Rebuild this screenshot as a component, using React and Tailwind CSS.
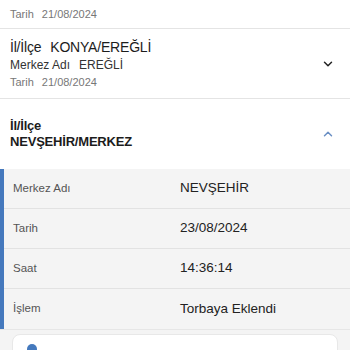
import { ChevronDown, ChevronUp } from 'lucide-react'

const rows = [
  { label: 'Merkez Adı', value: 'NEVŞEHİR' },
  { label: 'Tarih', value: '23/08/2024' },
  { label: 'Saat', value: '14:36:14' },
  { label: 'İşlem', value: 'Torbaya Eklendi' },
]

export default function App() {
  return (
    <div className="w-[350px] h-[350px] overflow-hidden bg-white text-[#1c1c1c]" style={{ fontFamily: '"Liberation Sans", Arial, sans-serif' }}>
      {/* previous item tail */}
      <div className="h-[29px] pl-[10px] pr-3 flex items-center text-[11px] text-[#777] border-b border-[#e4e4e4]">
        <span>Tarih</span>
        <span className="ml-[8px]">21/08/2024</span>
      </div>

      {/* collapsed item */}
      <div className="h-[70px] pl-[10px] pr-3 flex items-center border-b border-[#e4e4e4]">
        <div className="flex-1 flex flex-col">
          <div className="text-[14px] leading-[18px] mt-[1px] tracking-[-0.2px]">
            <span>İl/İlçe</span>
            <span className="ml-[9px]">KONYA/EREĞLİ</span>
          </div>
          <div className="text-[12px] leading-[17px] mt-[1px] text-[#333]">
            <span>Merkez Adı</span>
            <span className="ml-[9px]">EREĞLİ</span>
          </div>
          <div className="text-[11px] leading-[17px] text-[#777]">
            <span>Tarih</span>
            <span className="ml-[8px]">21/08/2024</span>
          </div>
        </div>
        <ChevronDown size={14} strokeWidth={2.5} className="text-[#222] mr-[3px]" />
      </div>

      {/* expanded item */}
      <div className="h-[70px] pl-[10px] pr-3 flex items-center">
        <div className="flex-1 font-bold text-[13px] leading-[16px] tracking-[-0.2px]">
          <div>İl/İlçe</div>
          <div>NEVŞEHİR/MERKEZ</div>
        </div>
        <ChevronUp size={14} strokeWidth={2.5} className="text-[#6a8fc4] mr-[3px]" />
      </div>

      <div className="flex bg-[#f4f4f4]">
        <div className="w-[4px] bg-[#4579bd]" />
        <div className="flex-1">
          {rows.map((r, i) => (
            <div key={i} className={`h-[40px] flex items-center ${i < rows.length - 1 ? 'border-b border-[#e2e2e2]' : ''}`}>
              <div className="w-[176px] pl-[9px] text-[11.5px] text-[#555]">{r.label}</div>
              <div className="text-[13.5px] text-[#222]">{r.value}</div>
            </div>
          ))}
        </div>
      </div>

      <div className="bg-[#f4f4f4] h-[30px] pt-[4px] px-3 border-t border-[#e6e6e6]">
        <div className="h-full bg-white rounded-t-lg border border-[#e8e8e8] relative">
          <div className="absolute left-[14px] top-[9px] w-[10px] h-[10px] rounded-full bg-[#4579bd]" />
        </div>
      </div>
    </div>
  )
}
